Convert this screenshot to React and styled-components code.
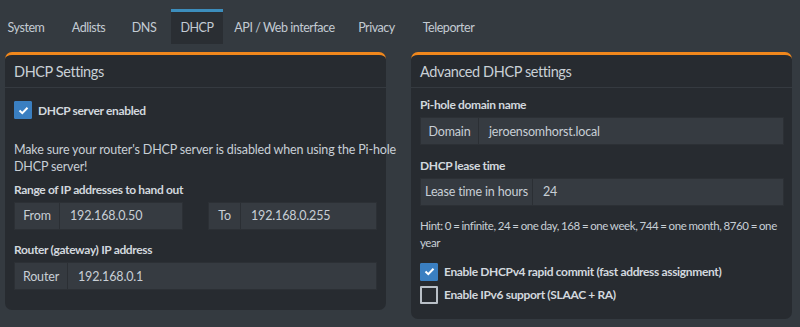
import React from "react";
import styled, { createGlobalStyle } from "styled-components";

const GlobalStyle = createGlobalStyle`
    body {
        margin: 0;
        background-color: #343a40;
        font-family: "Lato", "Open Sans", sans-serif;
        font-size: 12.5px;
        letter-spacing: -0.15px;
        color: #c8cfd6;
    }
`;

const tabs = [
    { name: "System", width: 60 },
    { name: "Adlists", width: 57 },
    { name: "DNS", width: 46 },
    { name: "DHCP", width: 52 },
    { name: "API / Web interface", width: 115 },
    { name: "Privacy", width: 61 },
    { name: "Teleporter", width: 75 },
];

const CheckIcon = () => (
    <svg width="11" height="9" viewBox="0 0 11 9">
        <path d="M1.5 4.5 L4.3 7.2 L9.5 1.8" fill="none" stroke="#fff" strokeWidth="2" />
    </svg>
);

const Check = ({ checked, children }) => (
    <CheckRow>
        <Box $checked={checked}>{checked && <CheckIcon />}</Box>
        <CheckLabel>{children}</CheckLabel>
    </CheckRow>
);

const Group = ({ addon, value, $width }) => (
    <InputGroup>
        <Addon $width={$width}>{addon}</Addon>
        <Value>{value}</Value>
    </InputGroup>
);

const App = () => {
    return (
        <>
            <GlobalStyle />
            <Tabs>
                {tabs.map((t) => (
                    <Tab key={t.name} $w={t.width} $active={t.name === "DHCP"}>
                        {t.name}
                    </Tab>
                ))}
            </Tabs>
            <Columns>
                <Panel>
                    <Header>DHCP Settings</Header>
                    <Body>
                        <Check checked>DHCP server enabled</Check>
                        <Note>
                            Make sure your router's DHCP server is disabled when using the Pi-hole
                            <br />
                            DHCP server!
                        </Note>
                        <Label $gap="5.5px">Range of IP addresses to hand out</Label>
                        <Pair>
                            <Group addon="From" value="192.168.0.50" $width="45px" />
                            <Group addon="To" value="192.168.0.255" $width="32px" />
                        </Pair>
                        <Label>Router (gateway) IP address</Label>
                        <Group addon="Router" value="192.168.0.1" $width="53px" />
                    </Body>
                </Panel>
                <Panel $right>
                    <Header>Advanced DHCP settings</Header>
                    <Body $right>
                        <Label $gap="0">Pi-hole domain name</Label>
                        <Group addon="Domain" value="jeroensomhorst.local" $width="58px" />
                        <Label>DHCP lease time</Label>
                        <Group addon="Lease time in hours" value="24" $width="112px" />
                        <Hint>
                            Hint: 0 = infinite, 24 = one day, 168 = one week, 744 = one month, 8760 = one
                            <br />
                            year
                        </Hint>
                        <Checks>
                            <Check checked>Enable DHCPv4 rapid commit (fast address assignment)</Check>
                            <Check>Enable IPv6 support (SLAAC + RA)</Check>
                        </Checks>
                    </Body>
                </Panel>
            </Columns>
        </>
    );
};

export default App;

const Tabs = styled.div`
    display: flex;
    gap: 4px;
    margin-left: -4px;
    padding-top: 9px;
`;

const Tab = styled.div`
    flex: 0 0 ${(p) => p.$w}px;
    text-align: center;
    padding: 8px 0;
    line-height: 16px;
    font-size: 12.5px;
    letter-spacing: -0.45px;
    border-top: 3px solid ${(p) => (p.$active ? "#3c8dbc" : "transparent")};
    background-color: ${(p) => (p.$active ? "#2a2e33" : "transparent")};
    color: #c3cbd3;
`;

const Columns = styled.div`
    display: grid;
    grid-template-columns: minmax(0, 1fr) minmax(0, 1fr);
    gap: 25px;
    align-items: start;
    padding: 8px 8px 0 5px;
`;

const Panel = styled.div`
    background-color: #272b30;
    border-top: 3px solid #f0871c;
    border-radius: 7px;
    padding-bottom: ${(p) => (p.$right ? "15px" : "20px")};
`;

const Header = styled.div`
    padding: 0 9px;
    height: 32px;
    line-height: 33px;
    font-size: 14.5px;
    letter-spacing: -0.4px;
    color: #c9d0d6;
    border-bottom: 1px solid #353a40;
`;

const Body = styled.div`
    display: flex;
    flex-direction: column;
    padding: ${(p) => (p.$right ? "8px 8px" : "13px 9px")} 0 9px;
`;

const CheckRow = styled.div`
    display: flex;
    align-items: center;
    gap: 6px;
    height: 18px;
`;

const Box = styled.div`
    box-sizing: border-box;
    width: 18px;
    height: 18px;
    display: flex;
    align-items: center;
    justify-content: center;
    background-color: ${(p) => (p.$checked ? "#3a7fc1" : "#272b30")};
    border: ${(p) => (p.$checked ? "1px solid #3a7fc1" : "2px solid #b9c0c7")};
    border-radius: 1px;
`;

const CheckLabel = styled.span`
    font-weight: bold;
    font-size: 12px;
    letter-spacing: -0.35px;
    color: #d2d8de;
`;

const Note = styled.p`
    margin: 22px 0 0;
    line-height: 17px;
    white-space: nowrap;
`;

const Hint = styled(Note)`
    margin-top: 11.5px;
    font-size: 11.5px;
    letter-spacing: -0.4px;
    word-spacing: -0.5px;
`;

const Label = styled.div`
    font-weight: bold;
    font-size: 12px;
    letter-spacing: -0.35px;
    line-height: 17px;
    margin: ${(p) => p.$gap || "11.5px"} 0 4px;
    color: #d2d8de;
`;

const Pair = styled.div`
    display: grid;
    grid-template-columns: 169px 169px;
    justify-content: space-between;
`;

const InputGroup = styled.div`
    display: flex;
    height: 28px;
    box-sizing: border-box;
    border: 1px solid #2c3035;
    background-color: #363b41;
`;

const Addon = styled.div`
    flex: 0 0 ${(p) => p.$width};
    box-sizing: border-box;
    display: flex;
    align-items: center;
    justify-content: center;
    border-right: 1px solid #2b2f34;
    background-color: #353a40;
`;

const Value = styled.div`
    flex: 1;
    display: flex;
    align-items: center;
    padding-left: 10px;
`;

const Checks = styled.div`
    display: flex;
    flex-direction: column;
    gap: 5px;
    margin-top: 11.5px;
`;
